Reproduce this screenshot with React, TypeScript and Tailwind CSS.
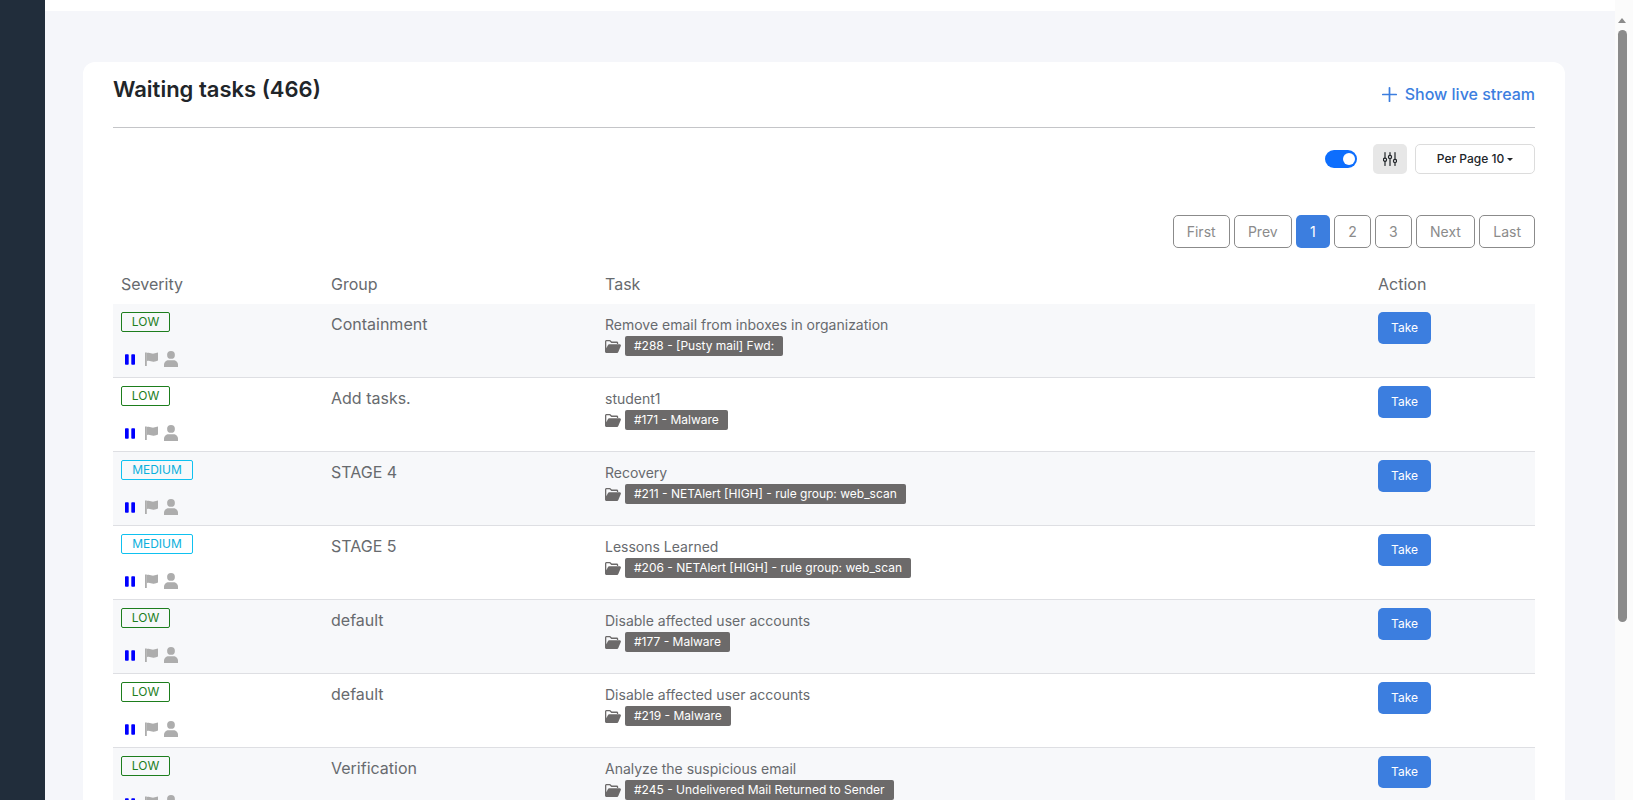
import { Plus } from "lucide-react";

type Task = {
  severity: "LOW" | "MEDIUM";
  group: string;
  title: string;
  caseName: string;
};

const tasks: Task[] = [
  { severity: "LOW", group: "Containment", title: "Remove email from inboxes in organization", caseName: "#288 - [Pusty mail] Fwd:" },
  { severity: "LOW", group: "Add tasks.", title: "student1", caseName: "#171 - Malware" },
  { severity: "MEDIUM", group: "STAGE 4", title: "Recovery", caseName: "#211 - NETAlert [HIGH] - rule group: web_scan" },
  { severity: "MEDIUM", group: "STAGE 5", title: "Lessons Learned", caseName: "#206 - NETAlert [HIGH] - rule group: web_scan" },
  { severity: "LOW", group: "default", title: "Disable affected user accounts", caseName: "#177 - Malware" },
  { severity: "LOW", group: "default", title: "Disable affected user accounts", caseName: "#219 - Malware" },
  { severity: "LOW", group: "Verification", title: "Analyze the suspicious email", caseName: "#245 - Undelivered Mail Returned to Sender" },
];

const pages = ["First", "Prev", "1", "2", "3", "Next", "Last"];

const PauseIcon = () => (
  <svg width="10" height="11" viewBox="0 0 10 11" className="fill-[#0000ff]">
    <rect x="0" y="0.3" width="3.700" height="10.400" rx="0.8" />
    <rect x="6.300" y="0.3" width="3.700" height="10.400" rx="0.8" />
  </svg>
);

const FlagIcon = () => (
  <svg width="13" height="14" viewBox="0 0 13 14" className="fill-[#adadad]">
    <path d="M0 0.500h1.800V14H0z" />
    <path d="M1.800 1.100c2.800-1.200 4.600 0.900 7 0.500 1.500-0.200 2.900-0.800 4.200-1.100v8c-1.200 0.500-2.600 1-4.200 1.200-2.500 0.300-4.300-1.700-7-0.500z" />
  </svg>
);

const UserIcon = () => (
  <svg width="14" height="16" viewBox="0 0 14 16" className="fill-[#adadad]">
    <circle cx="7" cy="3.900" r="3.900" />
    <path d="M0 16v-2.200c0-2.700 2.200-4.500 4.500-4.500h5c2.300 0 4.500 1.800 4.500 4.500V16z" />
  </svg>
);

const FolderOpenIcon = () => (
  <svg width="16" height="13" viewBox="0 0 16 13" className="fill-[#6c6a6a]">
    <path d="M0 1.500C0 .7.7 0 1.500 0h3.600l1.700 1.600h5c.8 0 1.400.6 1.400 1.400v1h-1.300V3.200c0-.2-.1-.3-.3-.3H6.300L4.600 1.300H1.600c-.2 0-.3.1-.3.300v6.700L3 5c.2-.5.700-.8 1.200-.8h10.400c1 0 1.600 1 1.200 1.800l-2.500 6c-.2.600-.7 1-1.300 1H1.500C.7 13 0 12.300 0 11.500z" />
  </svg>
);

const SlidersIcon = () => (
  <svg width="14" height="14" viewBox="0 0 14 14" fill="none" stroke="#212529" strokeWidth="1.200" strokeLinecap="round">
    <path d="M2 0.600v5.400M2 9.400v4M7 0.600v2.600M7 6.600v6.800M12 0.600v6.600M12 10.600v2.800" />
    <circle cx="2" cy="7.700" r="1.600" />
    <circle cx="7" cy="4.900" r="1.600" />
    <circle cx="12" cy="8.900" r="1.600" />
  </svg>
);

const SeverityBadge = ({ level }: { level: Task["severity"] }) =>
  level === "LOW" ? (
    <span className="flex h-5 w-[49px] items-center justify-center rounded-[2px] border border-[#1d7e1d] text-xs text-[#1d7e1d]">
      LOW
    </span>
  ) : (
    <span className="flex h-5 w-[72px] items-center justify-center rounded-[2px] border border-[#0fc1f0] text-xs text-[#0cb0dc]">
      MEDIUM
    </span>
  );

export default function App() {
  return (
    <div className="flex h-screen overflow-hidden bg-white font-['Inter',sans-serif] text-[#676a6e]">
      <aside className="w-[45px] shrink-0 bg-[#212d3b]" />

      <main className="flex min-w-0 flex-1 flex-col">
        <div className="h-[11px] shrink-0 bg-white" />
        <div className="flex-1 bg-[#f5f6fa] pl-[38px] pr-[50px] pt-[51px]">
          <section className="rounded-t-[12px] bg-white px-[30px] pt-[12px]">
            <div className="flex h-[54px] items-start justify-between border-b border-[#c4c5c8]">
              <h1 className="text-[22px] font-semibold leading-[30px] text-[#212529]">Waiting tasks (466)</h1>
              <button className="mt-[8px] flex h-[24px] items-center gap-[4px] text-base font-medium text-[#3c7edf]">
                <Plus className="h-[23px] w-[23px]" strokeWidth={1.8} />
                Show live stream
              </button>
            </div>

            <div className="mt-[16px] flex items-center justify-end">
              <div className="flex h-[18px] w-[32px] items-center justify-end rounded-full bg-[#0d6efd] pr-[2px]">
                <span className="h-[12px] w-[12px] rounded-full bg-white" />
              </div>
              <button className="ml-[16px] flex h-[30px] w-[34px] items-center justify-center rounded-[5px] bg-[#e7e7e7]">
                <SlidersIcon />
              </button>
              <button className="ml-[8px] flex h-[30px] w-[120px] items-center justify-center gap-[3px] rounded-[5px] border border-[#dcdcdc] text-xs font-medium text-[#212529]">
                Per Page 10
                <span className="h-0 w-0 border-x-[3px] border-t-[3px] border-x-transparent border-t-[#212529]" />
              </button>
            </div>

            <nav className="mt-[41px] flex justify-end gap-[4.300px] text-sm">
              {pages.map((page) =>
                page === "1" ? (
                  <button key={page} className="h-[33px] w-[34px] rounded-[5px] bg-[#3c7edf] text-white">
                    {page}
                  </button>
                ) : (
                  <button key={page} className="h-[33px] rounded-[5px] border border-[#8b8b8b] px-[13px] text-[#8b8b8b]">
                    {page}
                  </button>
                ),
              )}
            </nav>

            <table className="mt-[16px] w-full table-fixed border-separate border-spacing-0 text-left">
              <colgroup>
                <col className="w-[210px]" />
                <col className="w-[274px]" />
                <col />
                <col className="w-[165px]" />
              </colgroup>
              <thead>
                <tr className="h-[40px] text-base">
                  <th className="px-2 font-normal">Severity</th>
                  <th className="px-2 font-normal">Group</th>
                  <th className="px-2 font-normal">Task</th>
                  <th className="px-2 font-normal">Action</th>
                </tr>
              </thead>
              <tbody>
                {tasks.map((task, index) => (
                  <tr key={index} className={`h-[74px] align-top ${index % 2 === 0 ? "bg-[#f7f8fa]" : "bg-white"}`}>
                    <td className="border-b border-[#dedfe3] px-2 pt-2">
                      <SeverityBadge level={task.severity} />
                      <div className="mt-[19px] flex items-center pl-[4px]">
                        <PauseIcon />
                        <span className="ml-[10px]">
                          <FlagIcon />
                        </span>
                        <span className="ml-[6px]">
                          <UserIcon />
                        </span>
                      </div>
                    </td>
                    <td className="border-b border-[#dedfe3] px-2 pt-[10px] text-base leading-[20px]">{task.group}</td>
                    <td className="border-b border-[#dedfe3] px-2 pt-[11px]">
                      <div className="text-sm leading-[20px]">{task.title}</div>
                      <div className="mt-[1px] flex items-center gap-[4px]">
                        <FolderOpenIcon />
                        <span className="rounded-[2px] bg-[#6c6a6a] px-[9px] py-[2px] text-xs leading-[16px] text-white">
                          {task.caseName}
                        </span>
                      </div>
                    </td>
                    <td className="border-b border-[#dedfe3] px-2 pt-2">
                      <button className="h-[32px] w-[53px] rounded-[5px] bg-[#3c7edf] text-xs text-white">Take</button>
                    </td>
                  </tr>
                ))}
              </tbody>
            </table>
          </section>
        </div>
      </main>

      <div className="w-[18px] shrink-0 bg-[#fbfbfb] pl-[3px] pt-[18px]">
        <div className="h-0 w-0 border-x-[4.500px] border-b-[5px] border-x-transparent border-b-[#8b8b8b]" />
        <div className="mt-[7px] h-[592px] w-[9px] rounded-full bg-[#8b8b8b]" />
      </div>
    </div>
  );
}
